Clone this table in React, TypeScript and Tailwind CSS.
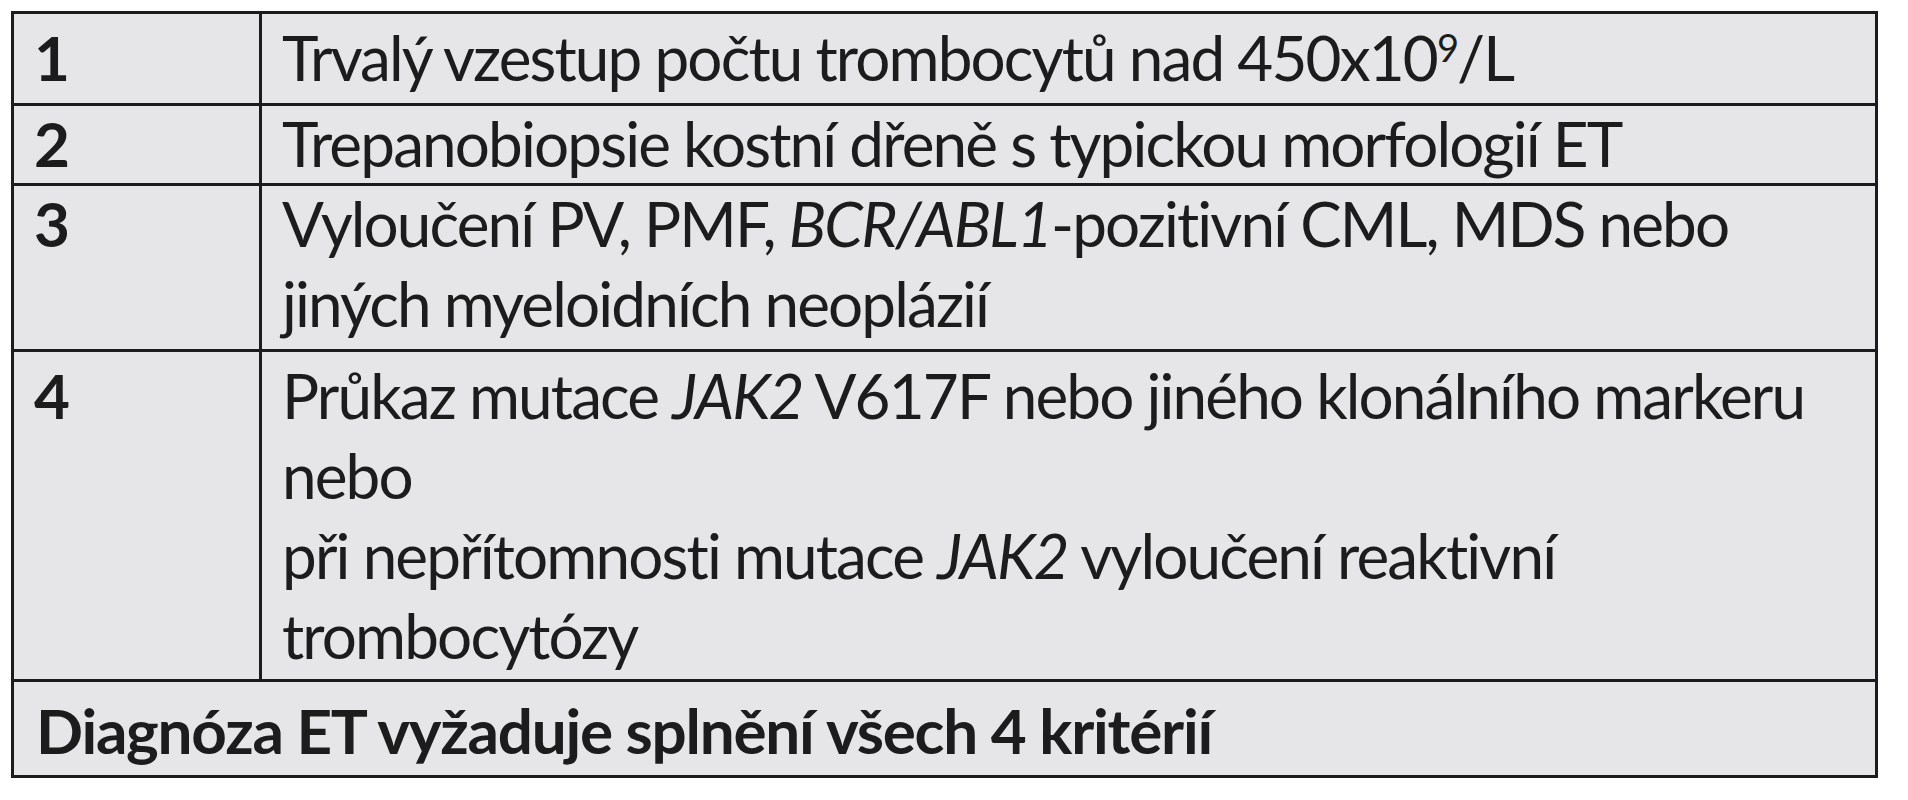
import React from "react";

const font = { fontFamily: "Lato, 'Open Sans', sans-serif" };

function Row({
  num,
  children,
  className,
  pad,
}: {
  num: string;
  children: React.ReactNode;
  className: string;
  pad: string;
}) {
  return (
    <div className={`flex border-t-[3px] border-[#1c1c1c] ${className}`}>
      <div className={`w-[248px] shrink-0 border-r-[3px] border-[#1c1c1c] pl-[20px] font-bold ${pad}`}>{num}</div>
      <div className={`flex-1 pl-[20px] whitespace-nowrap ${pad}`}>{children}</div>
    </div>
  );
}

export default function App() {
  return (
    <div className="min-h-[800px] w-[1908px] bg-white pl-[11px] pt-[11px]" style={font}>
      <div className="w-[1867px] overflow-hidden border-[3px] border-[#1c1c1c] bg-[#e6e6e8] text-[#1c1c1c] text-[62px] leading-[80px] tracking-[-0.03em]">
        <div className="flex h-[89px]">
          <div className="w-[248px] shrink-0 border-r-[3px] border-[#1c1c1c] pl-[20px] pt-[3px] font-bold">1</div>
          <div className="flex-1 pl-[20px] pt-[3px] whitespace-nowrap">
            Trvalý vzestup počtu trombocytů nad 450x10<sup className="text-[38px]">9</sup>/L
          </div>
        </div>
        <Row num="2" className="h-[80px]" pad="-mt-[3px]">
          Trepanobiopsie kostní dřeně s typickou morfologií ET
        </Row>
        <Row num="3" className="h-[166px]" pad="-mt-[3px]">
          Vyloučení PV, PMF, <i>BCR/ABL1</i>-pozitivní CML, MDS nebo
          <br />
          jiných myeloidních neoplázií
        </Row>
        <Row num="4" className="h-[330px]" pad="pt-[3px]">
          Průkaz mutace <i>JAK2</i> V617F nebo jiného klonálního markeru
          <br />
          nebo
          <br />
          při nepřítomnosti mutace <i>JAK2</i> vyloučení reaktivní
          <br />
          trombocytózy
        </Row>
        <div className="h-[96px] border-t-[3px] border-[#1c1c1c] pl-[22px] pt-[8px] font-bold tracking-[-0.02em]">
          Diagnóza ET vyžaduje splnění všech 4 kritérií
        </div>
      </div>
    </div>
  );
}
